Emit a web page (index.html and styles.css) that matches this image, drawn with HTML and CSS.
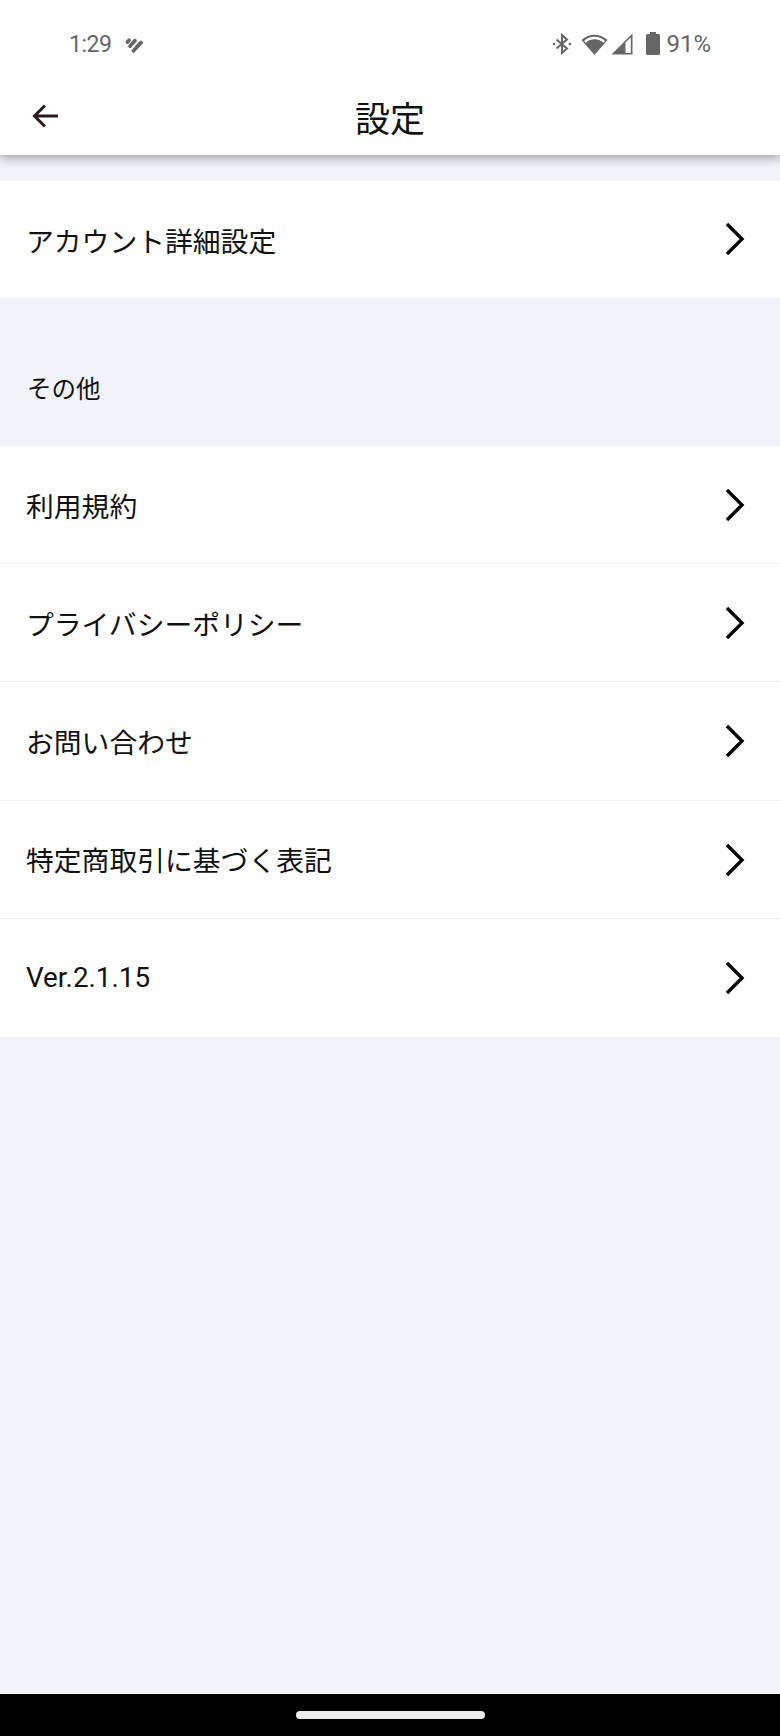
FILE: index.html
```html
<!DOCTYPE html>
<html lang="ja">
<head>
	<meta charset="utf-8">
	<title>設定</title>
	<link rel="stylesheet" href="styles.css">
</head>
<body>
<div class="screen">
	<header class="appbar">
		<div class="status">
			<div class="status-left">
				<span class="time">1:29</span>
				<svg class="app-icon" width="18" height="16" viewBox="0 0 18 16"><path d="M2.5 5 L4 3.2 M5 9.2 L10 3.6 M8.5 13.8 L16 5.5" stroke="#666" stroke-width="3.7" stroke-linecap="round" fill="none"/></svg>
			</div>
			<div class="status-right">
				<svg class="bt" width="20" height="22" viewBox="0 0 20 22"><path d="M4.5 6.5 L15 15.5 L10 20 L10 2 L15 6.5 L4.5 15.5" stroke="#666" stroke-width="2" fill="none"/><circle cx="2" cy="11" r="1.3" fill="#666"/><circle cx="18" cy="11" r="1.3" fill="#666"/></svg>
				<svg class="wifi" width="27" height="22" viewBox="0 0 27 22"><path d="M0.5 7 C8 0 19 0 26.5 7 L13.5 22 Z" fill="#666"/><path d="M3.8 8.8 C9.5 3.8 17.5 3.8 23.2 8.8" stroke="#fff" stroke-width="2.4" fill="none"/></svg>
				<svg class="signal" width="22" height="22" viewBox="0 0 22 22"><path d="M0.5 21.5 L21.5 0.5 L21.5 21.5 Z" fill="#666"/><path d="M14.5 20 L14.5 9.5 L19.8 4.5 L19.8 20 Z" fill="#fff"/></svg>
				<svg class="battery" width="14" height="23" viewBox="0 0 14 23"><path d="M4 0 H10 V2 H12.5 Q14 2 14 3.5 V21.5 Q14 23 12.5 23 H1.5 Q0 23 0 21.5 V3.5 Q0 2 1.5 2 H4 Z" fill="#666"/></svg>
				<span class="percent">91%</span>
			</div>
		</div>
		<div class="toolbar">
			<svg class="back" width="28" height="26" viewBox="0 0 28 26"><path d="M26 13 H3 M13 2.5 L2.5 13 L13 23.5" stroke="#2a1a1a" stroke-width="3" fill="none"/></svg>
			<h1 class="title">設定</h1>
		</div>
	</header>

	<main class="content">
		<ul class="list first">
			<li class="row">アカウント詳細設定<svg class="chev" width="22" height="34" viewBox="0 0 22 34"><path d="M4 2 L19 17 L4 32" stroke="#000" stroke-width="3.4" fill="none"/></svg></li>
		</ul>

		<p class="section">その他</p>

		<ul class="list">
			<li class="row">利用規約<svg class="chev" width="22" height="34" viewBox="0 0 22 34"><path d="M4 2 L19 17 L4 32" stroke="#000" stroke-width="3.4" fill="none"/></svg></li>
			<li class="row">プライバシーポリシー<svg class="chev" width="22" height="34" viewBox="0 0 22 34"><path d="M4 2 L19 17 L4 32" stroke="#000" stroke-width="3.4" fill="none"/></svg></li>
			<li class="row">お問い合わせ<svg class="chev" width="22" height="34" viewBox="0 0 22 34"><path d="M4 2 L19 17 L4 32" stroke="#000" stroke-width="3.4" fill="none"/></svg></li>
			<li class="row">特定商取引に基づく表記<svg class="chev" width="22" height="34" viewBox="0 0 22 34"><path d="M4 2 L19 17 L4 32" stroke="#000" stroke-width="3.4" fill="none"/></svg></li>
			<li class="row">Ver.2.1.15<svg class="chev" width="22" height="34" viewBox="0 0 22 34"><path d="M4 2 L19 17 L4 32" stroke="#000" stroke-width="3.4" fill="none"/></svg></li>
		</ul>
	</main>

	<footer class="navbar">
		<div class="handle"></div>
	</footer>
</div>
</body>
</html>
```

FILE: styles.css
```css
* {
	box-sizing: border-box;
}

body {
	margin: 0;
	font-family: Roboto, "Noto Sans CJK JP", sans-serif;
	color: #111;
	background-color: #f1f3f8;
}

.screen {
	width: 780px;
	height: 1736px;
	display: flex;
	flex-direction: column;
}

.appbar {
	height: 155px;
	background-color: #fff;
	box-shadow: 0 3px 10px rgba(0, 0, 0, 0.35);
	position: relative;
}

.status {
	height: 74px;
	padding: 13px 69px 0 69px;
	display: flex;
	justify-content: space-between;
	align-items: center;
	color: #666;
	font-size: 24px;
}

.status-left,
.status-right {
	display: flex;
	align-items: center;
}

.status-left {
	padding-top: 2px;
}

.time {
	font-size: 23px;
	letter-spacing: -0.5px;
}

.app-icon {
	margin-left: 14px;
}

.wifi {
	margin-left: 9px;
}

.signal {
	margin-left: 3px;
}

.battery {
	margin-left: 13px;
}

.percent {
	margin-left: 6px;
}

.toolbar {
	height: 81px;
	padding: 3px 0 0 32px;
	display: flex;
	align-items: center;
	position: relative;
}

.title {
	position: absolute;
	left: 0;
	right: 0;
	margin: 0;
	text-align: center;
	font-size: 35px;
	font-weight: 400;
}

.content {
	flex: 1;
	padding-top: 26px;
}

.list {
	list-style: none;
	margin: 0;
	padding: 0;
	background-color: #fff;
}

.row {
	height: 118.2px;
	padding: 0 35px 0 26px;
	display: flex;
	justify-content: space-between;
	align-items: center;
	font-size: 27.8px;
	border-bottom: 1.5px solid #f2f2f8;
}

.row:last-child {
	border-bottom: none;
}

.chev {
	margin-top: 1px;
}

.first .row {
	height: 117px;
}

.first .chev {
	margin-top: -1px;
}

.section {
	height: 148px;
	margin: 0;
	padding: 74px 0 0 27px;
	font-size: 24.5px;
	line-height: 36px;
}

.navbar {
	height: 43px;
	background-color: #000;
	border-top: 1px solid #fff;
	display: flex;
	justify-content: center;
	padding-top: 17px;
}

.handle {
	width: 189px;
	height: 8px;
	border-radius: 4px;
	background-color: #eee;
}
```
